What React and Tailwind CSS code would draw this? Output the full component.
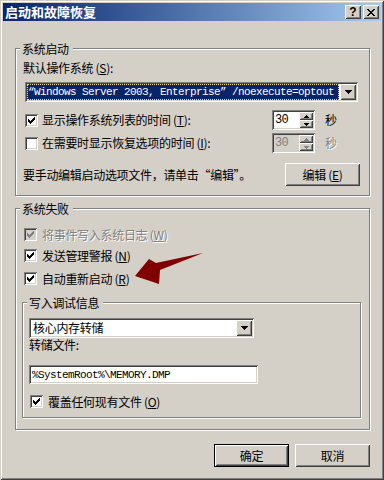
import React from "react";

// Win2000 classic 3D edges
const SUNKEN =
  "shadow-[inset_1px_1px_0_#808080,inset_-1px_-1px_0_#fff,inset_2px_2px_0_#404040,inset_-2px_-2px_0_#d4d0c8]";
const RAISED =
  "shadow-[inset_1px_1px_0_#fff,inset_-1px_-1px_0_#404040,inset_2px_2px_0_#d4d0c8,inset_-2px_-2px_0_#808080]";
const ETCHED = "border border-[#808080] shadow-[inset_1px_1px_0_#fff,1px_1px_0_#fff]";
const MONO = "font-['Liberation_Mono',monospace] text-[11px] tracking-[-0.6px]";
const GREY = "text-[#808080] [text-shadow:1px_1px_0_#fff]";

function Check({ checked = true, disabled = false }) {
  const cols = [2, 3, 4, 3, 2, 1, 0];
  return (
    <div
      className={`relative w-[13px] h-[13px] shrink-0 ${SUNKEN} ${
        disabled ? "bg-[#d4d0c8]" : "bg-white"
      }`}
    >
      {checked && (
        <svg width="13" height="13" className="absolute inset-0" shapeRendering="crispEdges">
          {cols.map((y, i) => (
            <rect key={i} x={3 + i} y={3 + y} width="1" height="3" fill={disabled ? "#808080" : "#000"} />
          ))}
        </svg>
      )}
    </div>
  );
}

function DownTri({ color = "#000" }) {
  return (
    <svg width="7" height="4" shapeRendering="crispEdges">
      <path d="M0 0H7V1H6V2H5V3H4V4H3V3H2V2H1V1H0Z" fill={color} />
    </svg>
  );
}

function SmallTri({ up, color = "#000" }) {
  return (
    <svg width="5" height="3" shapeRendering="crispEdges">
      <path
        d={up ? "M2 0H3V1H4V2H5V3H0V2H1V1H2Z" : "M0 0H5V1H4V2H3V3H2V2H1V1H0Z"}
        fill={color}
      />
    </svg>
  );
}

function Spin({ disabled = false }) {
  const c = disabled ? "#808080" : "#000";
  return (
    <div className={`flex w-[43px] h-[20px] p-[2px] ${SUNKEN} ${disabled ? "bg-[#d4d0c8]" : "bg-white"}`}>
      <div className={`flex-1 pl-[1px] leading-[16px] ${MONO} text-[12px] ${disabled ? "text-[#808080]" : ""}`}>30</div>
      <div className="flex flex-col w-[14px]">
        <div className={`flex-1 flex items-center justify-center bg-[#d4d0c8] ${RAISED}`}>
          <SmallTri up color={c} />
        </div>
        <div className={`flex-1 flex items-center justify-center bg-[#d4d0c8] ${RAISED}`}>
          <SmallTri color={c} />
        </div>
      </div>
    </div>
  );
}

function DropBtn() {
  return (
    <div className={`w-[16px] h-full shrink-0 flex items-center justify-center bg-[#d4d0c8] ${RAISED}`}>
      <DownTri />
    </div>
  );
}

function Button({ children, isDefault = false }) {
  return (
    <button
      type="button"
      className={`w-[75px] h-[23px] flex items-center justify-center bg-[#d4d0c8] text-[12px] leading-[14px] ${RAISED} ${
        isDefault ? "border border-black" : ""
      }`}
    >
      {children}
    </button>
  );
}

function Legend({ children }) {
  return (
    <span className="absolute left-[4px] -top-[7px] pl-[2px] pr-[4px] bg-[#d4d0c8] leading-[14px]">
      {children}
    </span>
  );
}

function CheckRow({ disabled, children, className = "" }) {
  return (
    <div className={`flex items-center h-[13px] ${className}`}>
      <Check disabled={disabled} />
      <span className={`ml-[5px] leading-[14px] ${disabled ? GREY : ""}`}>{children}</span>
    </div>
  );
}

export default function App() {
  return (
    <div
      className="relative w-[384px] h-[480px] p-[3px] flex flex-col bg-[#d4d0c8] text-black text-[12px] tracking-[-0.3px] font-['Noto_Sans_CJK_SC',sans-serif] shadow-[inset_1px_1px_0_#d4d0c8,inset_-1px_-1px_0_#404040,inset_2px_2px_0_#fff,inset_-2px_-2px_0_#808080]"
    >
      {/* Barra de título */}
      <div className="h-[18px] flex items-center pl-[2px] pr-[2px] bg-linear-to-r from-[#0a246a] to-[#a6caf0]">
        <span className="text-white font-bold text-[13px] leading-[18px] tracking-[0px]">启动和故障恢复</span>
        <div className="ml-auto flex gap-[2px]">
          <div className={`w-[16px] h-[14px] flex items-center justify-center bg-[#d4d0c8] ${RAISED}`}>
            <span className="font-['Liberation_Sans',sans-serif] font-bold text-[12px] leading-[12px] tracking-[0px]">?</span>
          </div>
          <div className={`w-[16px] h-[14px] flex items-center justify-center bg-[#d4d0c8] ${RAISED}`}>
            <svg width="8" height="7" shapeRendering="crispEdges">
              <path
                d="M0 0H2V1H3V2H5V1H6V0H8V1H7V2H6V3H5V4H6V5H7V6H8V7H6V6H5V5H3V6H2V7H0V6H1V5H2V4H3V3H2V2H1V1H0Z"
                fill="#000"
              />
            </svg>
          </div>
        </div>
      </div>

      <div className="flex flex-col pl-[12px] pr-[11px] pt-[27px]">
        {/* Sistema de inicio */}
        <div className={`relative h-[148px] flex flex-col ${ETCHED}`}>
          <Legend>系统启动</Legend>
          <div className="ml-[7px] mt-[12px] leading-[14px]">
            默认操作系统 (<u>S</u>):
          </div>
          <div className={`ml-[9px] mt-[7px] w-[333px] h-[20px] p-[2px] flex bg-white ${SUNKEN}`}>
            <div className="flex-1 min-w-0 mr-[1px] bg-[#0a246a] border border-dotted border-[#e8e0a8] overflow-hidden">
              <div className={`${MONO} text-white whitespace-nowrap leading-[14px]`}>
                “Windows Server 2003, Enterprise” /noexecute=optout
              </div>
            </div>
            <DropBtn />
          </div>

          <div className="ml-[9px] mt-[8px] h-[20px] flex items-center">
            <div className="w-[247px] flex items-center">
              <Check />
              <span className="ml-[4px] leading-[14px]">
                显示操作系统列表的时间 (<u>T</u>):
              </span>
            </div>
            <Spin />
            <span className="ml-[10px] leading-[14px]">秒</span>
          </div>

          <div className="ml-[9px] mt-[3px] h-[20px] flex items-center">
            <div className="w-[247px] flex items-center">
              <Check checked={false} />
              <span className="ml-[4px] leading-[14px]">
                在需要时显示恢复选项的时间 (<u>I</u>):
              </span>
            </div>
            <Spin disabled />
            <span className={`ml-[10px] leading-[14px] ${GREY}`}>秒</span>
          </div>

          <div className="ml-[7px] mr-[9px] mt-[10px] h-[23px] flex items-center">
            <span className="leading-[14px]">要手动编辑启动选项文件，请单击“编辑”。</span>
            <div className="ml-auto">
              <Button>
                编辑 (<u>E</u>)
              </Button>
            </div>
          </div>
        </div>

        {/* Fallo del sistema */}
        <div className={`relative mt-[12px] h-[222px] flex flex-col ${ETCHED}`}>
          <Legend>系统失败</Legend>
          <CheckRow disabled className="ml-[8px] mt-[19px]">
            将事件写入系统日志 (<u>W</u>)
          </CheckRow>
          <CheckRow className="ml-[8px] mt-[8px]">
            发送管理警报 (<u>N</u>)
          </CheckRow>
          <CheckRow className="ml-[8px] mt-[10px]">
            自动重新启动 (<u>R</u>)
          </CheckRow>

          <div className={`relative ml-[6px] mt-[17px] w-[339px] h-[116px] flex flex-col ${ETCHED}`}>
            <Legend>写入调试信息</Legend>
            <div className={`ml-[6px] mt-[15px] w-[225px] h-[20px] p-[2px] flex bg-white ${SUNKEN}`}>
              <div className="flex-1 pl-[2px] leading-[16px]">核心内存转储</div>
              <DropBtn />
            </div>
            <div className="ml-[6px] leading-[14px]">转储文件:</div>
            <div className={`ml-[6px] mt-[13px] w-[229px] h-[19px] px-[3px] flex items-center bg-white ${SUNKEN}`}>
              <span className={`${MONO} leading-[14px] whitespace-nowrap`}>%SystemRoot%\MEMORY.DMP</span>
            </div>
            <CheckRow className="ml-[7px] mt-[11px]">
              覆盖任何现有文件 (<u>O</u>)
            </CheckRow>
          </div>
        </div>

        {/* Botones */}
        <div className="mt-[14px] flex justify-end gap-[6px]">
          <Button isDefault>确定</Button>
          <Button>取消</Button>
        </div>
      </div>

      {/* Flecha roja de anotación */}
      <svg
        width="384"
        height="480"
        className="absolute left-0 top-0 pointer-events-none"
      >
        <polygon points="135,276 149,259 156,263 203,253 160,270 159,284" fill="#800000" />
      </svg>
    </div>
  );
}
